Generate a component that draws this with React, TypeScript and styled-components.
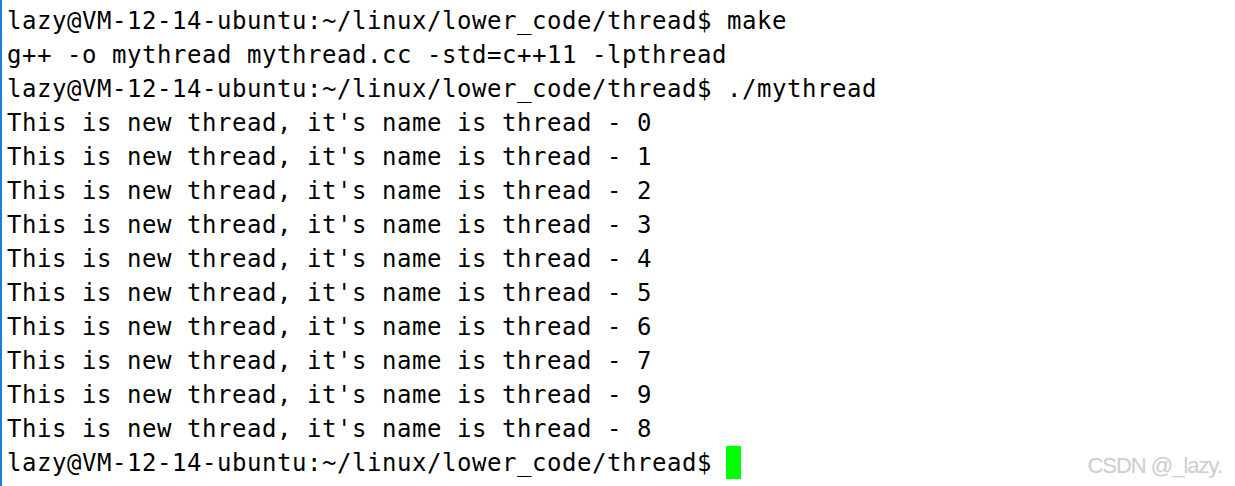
import React from "react";
import styled, { createGlobalStyle } from "styled-components";

const Global = createGlobalStyle`
  html, body { margin: 0; padding: 0; background: #ffffff; }
  #root { width: 1235px; height: 486px; }
`;

const Terminal = styled.div`
  position: relative;
  box-sizing: border-box;
  width: 1235px;
  height: 486px;
  overflow: hidden;
  background: #ffffff;
  border-left: 2px solid #1a7fd6;
  padding: 4px 0 0 5px;
  display: flex;
  flex-direction: column;
`;

const Line = styled.div`
  font-family: "DejaVu Sans Mono", "Liberation Mono", monospace;
  font-size: 24px;
  letter-spacing: 0.552px;
  line-height: 34px;
  height: 34px;
  color: #000000;
  white-space: pre;
  display: flex;
  align-items: center;
`;

const Cursor = styled.span`
  display: inline-block;
  width: 15px;
  height: 33px;
  margin: -2px 0 0 -1px;
  background: #00ff00;
`;

const Watermark = styled.div`
  position: absolute;
  right: 13px;
  bottom: 7px;
  font-family: "Liberation Sans", Arial, sans-serif;
  font-size: 22px;
  letter-spacing: -1px;
  color: #cfcfcf;
  text-shadow: 0 0 1px rgba(0, 0, 0, 0.08);
`;

const prompt = "lazy@VM-12-14-ubuntu:~/linux/lower_code/thread$ ";
const order = [0, 1, 2, 3, 4, 5, 6, 7, 9, 8];

export default function App() {
  return (
    <>
      <Global />
      <Terminal>
        <Line>{prompt + "make"}</Line>
        <Line>g++ -o mythread mythread.cc -std=c++11 -lpthread</Line>
        <Line>{prompt + "./mythread"}</Line>
        {order.map((n) => (
          <Line key={n}>{`This is new thread, it's name is thread - ${n}`}</Line>
        ))}
        <Line>
          {prompt}
          <Cursor />
        </Line>
        <Watermark>CSDN @_lazy.</Watermark>
      </Terminal>
    </>
  );
}
